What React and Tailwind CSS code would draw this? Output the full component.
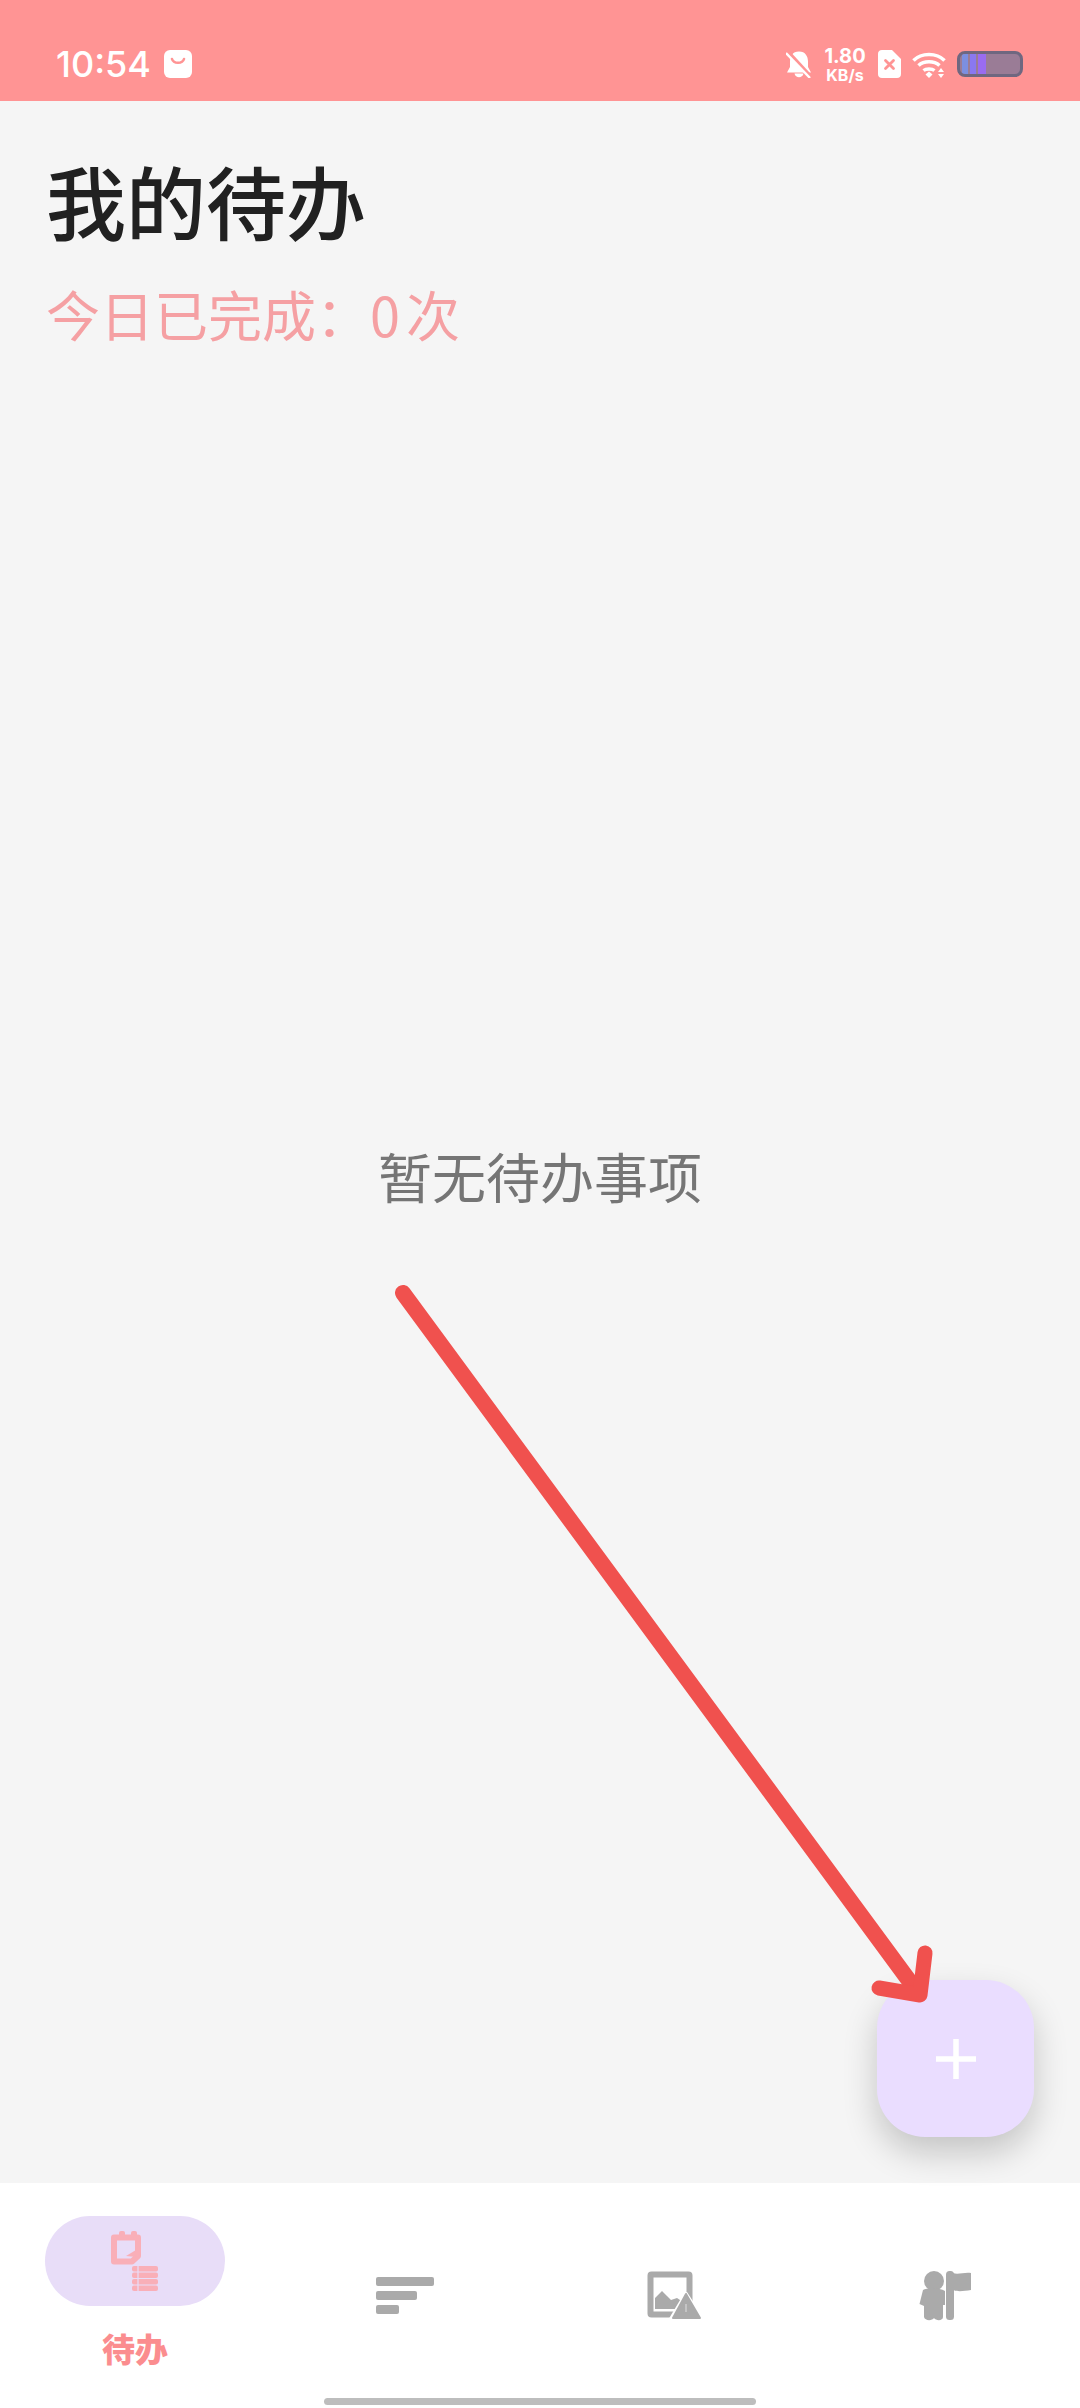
export default function App() {
  return (
    <div className="relative flex h-[2408px] w-[1080px] flex-col overflow-hidden bg-[#f5f5f5] font-['Noto_Sans_CJK_SC','Noto_Sans',sans-serif]">
      <StatusBar />
      <main className="flex flex-1 flex-col px-[46px] pt-[48px]">
        <h1 className="text-[80px] leading-[100px] font-medium text-[#212121]">我的待办</h1>
        <p className="mt-[30px] text-[54px] leading-[70px] text-[#f5a0a3]">
          今日已完成：0<span className="ml-[6px]">次</span>
        </p>
        <p className="mt-[792px] text-center text-[54px] leading-[70px] text-[#757575]">暂无待办事项</p>
      </main>
      <BottomNav />

      <button className="absolute left-[877px] top-[1980px] flex h-[157px] w-[157px] items-center justify-center rounded-[48px] bg-[#eaddff] shadow-[0_16px_34px_rgba(0,0,0,0.2)]">
        <svg width="40" height="40" viewBox="0 0 40 40">
          <rect x="17.25" y="0" width="5.5" height="40" fill="#fff" />
          <rect x="0" y="17.25" width="40" height="5.5" fill="#fff" />
        </svg>
      </button>

      <svg className="pointer-events-none absolute left-0 top-0" width="1080" height="2408" viewBox="0 0 1080 2408" fill="none">
        <path d="M403 1293L916 1990" stroke="#f0514e" strokeWidth="16" strokeLinecap="round" />
        <path d="M879 1988L920 1995L925 1953" stroke="#f0514e" strokeWidth="15" strokeLinecap="round" strokeLinejoin="round" />
      </svg>
    </div>
  );
}

function StatusBar() {
  return (
    <header className="flex h-[101px] shrink-0 items-center justify-between bg-[#ff9494] pl-[56px] pr-[57px] pt-[27px] text-white">
      <div className="flex items-center gap-[13px]">
        <span className="font-['Inter',sans-serif] text-[36px] leading-none font-medium">10:54</span>
        <svg width="28" height="28" viewBox="0 0 28 28">
          <rect width="28" height="28" rx="6" fill="#fff" />
          <path d="M8 9C9.5 14 18.5 14 20 9" fill="none" stroke="#ff9494" strokeWidth="2.6" strokeLinecap="round" />
        </svg>
      </div>
      <div className="flex items-center gap-[11px]">
        <svg width="26" height="28" viewBox="0 0 26 28" fill="none">
          <path d="M13 1.500C6.500 1.500 4 6.500 4 11.500V17L1 22.500H25L22 17V11.500C22 6.500 19.500 1.500 13 1.500Z" fill="#fff" />
          <path d="M8.500 23.500C9.500 28.500 16.500 28.500 17.500 23.500Z" fill="#fff" />
          <path d="M1 1L25 27" stroke="#ff9494" strokeWidth="4" />
          <path d="M0 3L24 28" stroke="#fff" strokeWidth="2.400" />
        </svg>
        <div className="flex w-[44px] flex-col items-center font-['Inter',sans-serif] font-bold leading-none">
          <span className="text-[20px] leading-[21px]">1.80</span>
          <span className="text-[16px] leading-[16px]">KB/s</span>
        </div>
        <svg width="23" height="28" viewBox="0 0 23 28">
          <path d="M4 0H14L23 9V24C23 26.500 21.500 28 19 28H4C1.500 28 0 26.500 0 24V4C0 1.500 1.500 0 4 0Z" fill="#fff" />
          <path d="M7.500 10.500L15.500 18.500M15.500 10.500L7.500 18.500" stroke="#ff9494" strokeWidth="2.800" strokeLinecap="round" />
        </svg>
        <svg width="34" height="27" viewBox="0 0 34 27" fill="none">
          <path d="M1.500 9.500C9.500 1.500 24.500 1.500 32.500 9.500" stroke="#fff" strokeWidth="3.600" />
          <path d="M6.500 14.500C12 9.500 22 9.500 27.500 14.500" stroke="#fff" strokeWidth="3.600" />
          <path d="M11.500 19.500C14 17.500 20 17.500 22.500 19.500" stroke="#fff" strokeWidth="3.400" />
          <path d="M13.500 23.500L17 20.500L20.500 23.500L17 27Z" fill="#fff" />
          <path d="M29 17L32 21H26Z M29 27L32 23H26Z" fill="#fff" />
        </svg>
        <div className="flex h-[26px] w-[66px] items-stretch gap-[2px] overflow-hidden rounded-[8px] border-[3px] border-[#6f6780] bg-[#9a7c96] pl-[2px]">
          <span className="w-[6px] bg-[#7c8fe0]" />
          <span className="w-[6px] bg-[#8a78f0]" />
          <span className="w-[8px] bg-[#9a6cf0]" />
        </div>
      </div>
    </header>
  );
}

function BottomNav() {
  return (
    <nav className="grid h-[225px] shrink-0 grid-cols-4 items-center justify-items-center bg-white">
      <div className="flex flex-col items-center">
        <div className="flex h-[90px] w-[180px] items-center justify-center rounded-full bg-[#e8ddf8]">
          <TaskIcon />
        </div>
        <span className="mb-[6px] mt-[20px] text-[33px] leading-[44px] font-black text-[#fb8d8f]">待办</span>
      </div>
      <ListIcon />
      <ImageIcon />
      <PersonIcon />
      <div className="absolute bottom-[3px] left-[324px] h-[7px] w-[432px] rounded-full bg-[#bdbdbd]" />
    </nav>
  );
}

function TaskIcon() {
  return (
    <svg className="blur-[0.5px]" width="48" height="60" viewBox="0 0 48 60" fill="none">
      <rect x="8" y="0" width="6" height="9" rx="2" fill="#f9afb8" />
      <rect x="20" y="0" width="6" height="9" rx="2" fill="#f9afb8" />
      <path d="M3 6.500H27V25L21 30.500H3Z" stroke="#f9afb8" strokeWidth="6" strokeLinejoin="round" />
      <path d="M15 25L25 19V26Z" fill="#f9afb8" />
      <g fill="#f9afb8">
        <rect x="21" y="35" width="26" height="5.500" rx="2" />
        <rect x="21" y="41.500" width="26" height="5.500" rx="2" />
        <rect x="21" y="48" width="26" height="5.500" rx="2" />
        <rect x="21" y="54.500" width="26" height="5.500" rx="2" />
      </g>
      <path d="M27 34V60" stroke="#e8ddf8" strokeWidth="1.200" />
    </svg>
  );
}

function ListIcon() {
  return (
    <div className="flex w-[58px] flex-col gap-[5px] blur-[0.5px]">
      <span className="h-[9px] w-[58px] rounded-[2px] bg-[#aaaaaa]" />
      <span className="h-[9px] w-[41px] rounded-[2px] bg-[#aaaaaa]" />
      <span className="h-[9px] w-[23px] rounded-[2px] bg-[#aaaaaa]" />
    </div>
  );
}

function ImageIcon() {
  return (
    <svg className="blur-[0.5px]" width="56" height="50" viewBox="0 0 56 50" fill="none">
      <rect x="3.500" y="3.500" width="39" height="40" rx="1" stroke="#aaaaaa" strokeWidth="6" />
      <path d="M8 38V27L15 20L20 25L24 29L30 27L36 31L30 38Z" fill="#aaaaaa" />
      <path d="M39 23L55 48H24Z" fill="#aaaaaa" stroke="#fff" strokeWidth="4" strokeLinejoin="round" />
      <path d="M39 23L53 47H26Z" fill="#aaaaaa" stroke="#aaaaaa" strokeWidth="2" strokeLinejoin="round" />
      <path d="M39 33V41" stroke="#c4c4c4" strokeWidth="2" />
    </svg>
  );
}

function PersonIcon() {
  return (
    <svg className="blur-[0.5px]" width="52" height="50" viewBox="0 0 52 50" fill="none">
      <circle cx="15" cy="10" r="10" fill="#aaaaaa" />
      <path d="M4 19C8 17 21 17 26 20V34H24V46C24 50 17 50 15 47C13 50 6 50 5 46V35L0.500 33Z" fill="#aaaaaa" />
      <rect x="27" y="0" width="8" height="49" rx="3.500" fill="#aaaaaa" />
      <path d="M34 2C39 4 45 1 52 2V19C45 20 39 21 34 19Z" fill="#aaaaaa" />
    </svg>
  );
}
